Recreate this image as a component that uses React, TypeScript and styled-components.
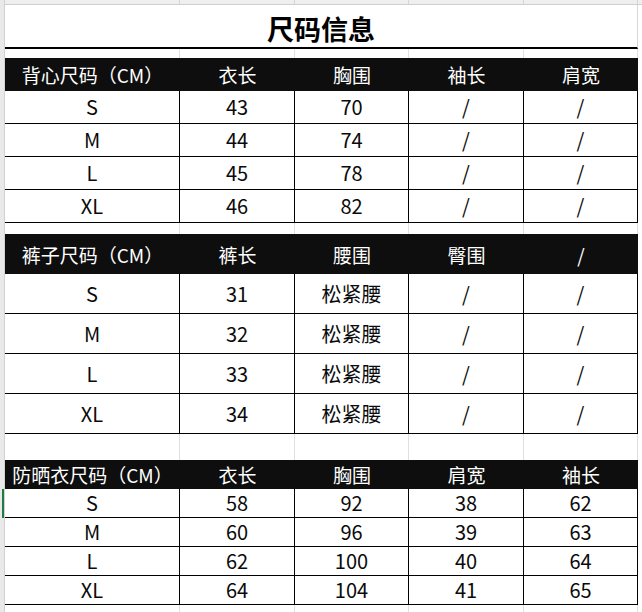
import React from "react";
import styled, { createGlobalStyle, css } from "styled-components";

const GlobalStyle = createGlobalStyle`
  html, body {
    margin: 0;
    padding: 0;
    background: #ffffff;
  }
  body {
    font-family: "Noto Sans CJK SC", "Noto Sans", "Liberation Sans", sans-serif;
  }
`;

const COLS = "175px 115px 114px 115px 114px";

const Page = styled.div`
  display: grid;
  grid-template-columns: 5px 633px 4px;
  width: 642px;
  height: 612px;
  overflow: hidden;
  background: #ffffff;
`;

const Gutter = styled.div`
  box-sizing: border-box;
  background: #e9e9e9;
  border-right: 1px solid #d2d2d2;
  display: flex;
  flex-direction: column;
`;

const SelectMark = styled.div<{ $top: number; $h: number }>`
  margin-top: ${(p) => p.$top}px;
  margin-left: 2px;
  width: 2px;
  height: ${(p) => p.$h}px;
  background: #1f7a4a;
`;

const RightEdge = styled.div`
  background: #ffffff;
  display: flex;
  flex-direction: column;
`;

const RightStrip = styled.div`
  height: 5px;
  background: #efefef;
  border-bottom: 1px solid #cfcfcf;
  box-sizing: border-box;
`;

const Sheet = styled.div`
  display: flex;
  flex-direction: column;
`;

const GridRow = styled.div<{ $h: number }>`
  display: grid;
  grid-template-columns: ${COLS};
  height: ${(p) => p.$h}px;
`;

type Kind = "strip" | "blank" | "head" | "data";

const Cell = styled.div<{ $kind: Kind }>`
  box-sizing: border-box;
  display: flex;
  align-items: center;
  justify-content: center;
  font-size: 19px;
  line-height: 1;
  white-space: nowrap;
  ${(p) =>
    p.$kind === "strip" &&
    css`
      background: #efefef;
      border-right: 1px solid #d6d6d6;
      border-bottom: 1px solid #cfcfcf;
    `}
  ${(p) =>
    p.$kind === "blank" &&
    css`
      background: #ffffff;
      border-right: 1px solid #e0e0e0;
    `}
  ${(p) =>
    p.$kind === "head" &&
    css`
      background: #0e0e0e;
      color: #ffffff;
    `}
  ${(p) =>
    p.$kind === "data" &&
    css`
      background: #ffffff;
      color: #0a0a0a;
      font-size: 20px;
      border-right: 1px solid #000000;
      border-bottom: 1px solid #000000;
    `}
`;

const TitleBar = styled.div`
  box-sizing: border-box;
  height: 44px;
  display: flex;
  align-items: center;
  justify-content: center;
  padding-top: 4px;
  border-bottom: 2px solid #000000;
  border-right: 1px solid #d6d6d6;
  font-size: 27px;
  font-weight: 600;
  color: #000000;
`;

type Table = {
  headH: number;
  rowH: number;
  gapBefore: number;
  headers: string[];
  rows: string[][];
};

const tables: Table[] = [
  {
    headH: 33,
    rowH: 33,
    gapBefore: 9,
    headers: ["背心尺码（CM）", "衣长", "胸围", "袖长", "肩宽"],
    rows: [
      ["S", "43", "70", "/", "/"],
      ["M", "44", "74", "/", "/"],
      ["L", "45", "78", "/", "/"],
      ["XL", "46", "82", "/", "/"],
    ],
  },
  {
    headH: 40,
    rowH: 40,
    gapBefore: 11,
    headers: ["裤子尺码（CM）", "裤长", "腰围", "臀围", "/"],
    rows: [
      ["S", "31", "松紧腰", "/", "/"],
      ["M", "32", "松紧腰", "/", "/"],
      ["L", "33", "松紧腰", "/", "/"],
      ["XL", "34", "松紧腰", "/", "/"],
    ],
  },
  {
    headH: 29,
    rowH: 29,
    gapBefore: 26,
    headers: ["防晒衣尺码（CM）", "衣长", "胸围", "肩宽", "袖长"],
    rows: [
      ["S", "58", "92", "38", "62"],
      ["M", "60", "96", "39", "63"],
      ["L", "62", "100", "40", "64"],
      ["XL", "64", "104", "41", "65"],
    ],
  },
];

const blanks = [0, 1, 2, 3, 4];

function BlankRow({ h, kind }: { h: number; kind: Kind }) {
  return (
    <GridRow $h={h}>
      {blanks.map((i) => (
        <Cell key={i} $kind={kind} />
      ))}
    </GridRow>
  );
}

function SizeTable({ t }: { t: Table }) {
  return (
    <>
      <BlankRow h={t.gapBefore} kind="blank" />
      <GridRow $h={t.headH}>
        {t.headers.map((h, i) => (
          <Cell key={i} $kind="head">
            {h}
          </Cell>
        ))}
      </GridRow>
      {t.rows.map((r, ri) => (
        <GridRow key={ri} $h={t.rowH}>
          {r.map((v, ci) => (
            <Cell key={ci} $kind="data">
              {v}
            </Cell>
          ))}
        </GridRow>
      ))}
    </>
  );
}

export default function App() {
  return (
    <>
      <GlobalStyle />
      <Page>
        <Gutter>
          <SelectMark $top={489} $h={29} />
        </Gutter>
        <Sheet>
          <BlankRow h={5} kind="strip" />
          <TitleBar>尺码信息</TitleBar>
          {tables.map((t, i) => (
            <SizeTable key={i} t={t} />
          ))}
          <BlankRow h={20} kind="blank" />
        </Sheet>
        <RightEdge>
          <RightStrip />
        </RightEdge>
      </Page>
    </>
  );
}
